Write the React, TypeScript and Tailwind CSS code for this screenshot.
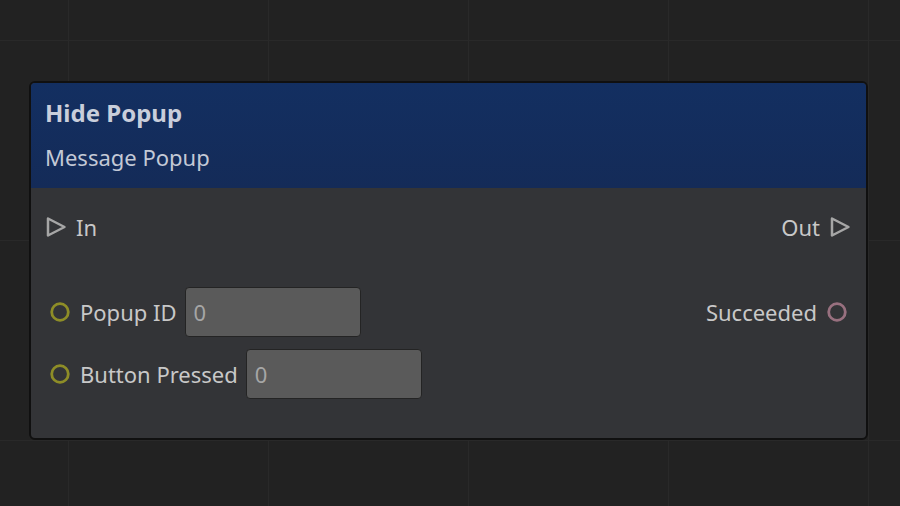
import React from "react";

const ExecPin: React.FC = () => (
  <svg width="22" height="24" viewBox="0 0 22 24" className="shrink-0">
    <path d="M3 3.5 L19.5 12 L3 20.5 Z" fill="none" stroke="#a6a6a6" strokeWidth="2.5" strokeLinejoin="round" />
  </svg>
);

const DataPin: React.FC<{ color: string }> = ({ color }) => (
  <svg width="20" height="20" viewBox="0 0 20 20" className="shrink-0">
    <circle cx="10" cy="10" r="8.3" fill="none" stroke={color} strokeWidth="2.8" />
  </svg>
);

const ValueBox: React.FC<{ value: string }> = ({ value }) => (
  <div className="w-[176px] h-[50px] rounded-[4px] border border-[#242424] bg-[#5a5a5a] flex items-center px-[8px] text-[#a6a6a6]">
    {value}
  </div>
);

export default function App() {
  return (
    <div
      className="relative w-[900px] h-[506px] overflow-hidden bg-[#222222] bg-[linear-gradient(to_right,#292929_1px,transparent_1px),linear-gradient(to_bottom,#292929_1px,transparent_1px)] bg-[size:200px_200px] bg-[position:68px_40px]"
      style={{ fontFamily: '"Noto Sans", "Open Sans", sans-serif' }}
    >
      {/* node */}
      <div className="absolute left-[29px] top-[81px] w-[839px] h-[359px] rounded-[6px] border-2 border-[#101010] bg-[#333437] overflow-hidden flex flex-col">
        {/* header */}
        <div className="h-[105px] shrink-0 bg-[linear-gradient(to_bottom,#132f61,#142b58)] px-[14px] pt-[12px] text-[#c9cedb]">
          <div className="text-[24px] font-bold leading-[36px]">Hide Popup</div>
          <div className="text-[22px] leading-[30px] mt-[11px] text-[#c3c9d6]">Message Popup</div>
        </div>

        {/* body */}
        <div className="flex-1 flex flex-col text-[22px] text-[#c8c8c8]">
          <div className="h-[40px] mt-[19px] flex items-center justify-between pl-[14px] pr-[15px]">
            <div className="flex items-center gap-[9px]">
              <ExecPin />
              <span>In</span>
            </div>
            <div className="flex items-center gap-[9px]">
              <span>Out</span>
              <ExecPin />
            </div>
          </div>

          <div className="mt-[40px] flex justify-between pl-[19px] pr-[19px]">
            <div className="flex flex-col gap-[12px]">
              <div className="h-[50px] flex items-center">
                <DataPin color="#8e8d27" />
                <span className="ml-[10px] mr-[8px]">Popup ID</span>
                <ValueBox value="0" />
              </div>
              <div className="h-[50px] flex items-center">
                <DataPin color="#8e8d27" />
                <span className="ml-[10px] mr-[8px]">Button Pressed</span>
                <ValueBox value="0" />
              </div>
            </div>
            <div className="h-[50px] flex items-center gap-[10px]">
              <span>Succeeded</span>
              <DataPin color="#98707f" />
            </div>
          </div>
        </div>
      </div>
    </div>
  );
}
